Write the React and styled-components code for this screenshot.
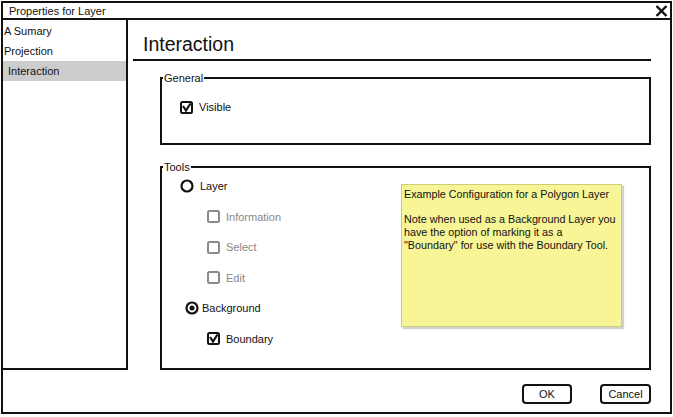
import React from 'react';
import styled, { createGlobalStyle } from 'styled-components';

const GlobalStyle = createGlobalStyle`
  body {
    margin: 0;
    background: #fff;
    font-family: "Liberation Sans", Arial, sans-serif;
    color: #111;
  }
`;

const Window = styled.div`
  box-sizing: border-box;
  width: 671px;
  height: 413px;
  margin: 1px 0 0 1px;
  border: 2px solid #111;
  display: flex;
  flex-direction: column;
`;

const TitleBar = styled.div`
  height: 15px;
  border-bottom: 2px solid #111;
  display: flex;
  align-items: center;
  justify-content: space-between;
  padding: 0 2px 0 6px;
  font-size: 11px;
`;

const Body = styled.div`
  display: flex;
  height: 350px;
`;

const Sidebar = styled.div`
  box-sizing: border-box;
  width: 125px;
  border-right: 2px solid #111;
  border-bottom: 2px solid #111;
  padding-top: 1px;
`;

const NavItem = styled.div`
  height: 20px;
  line-height: 20px;
  font-size: 11px;
  padding-left: ${(p) => (p.selected ? '5px' : '1px')};
  background: ${(p) => (p.selected ? '#cccccc' : 'transparent')};
`;

const Main = styled.div`
  flex: 1;
  display: flex;
  flex-direction: column;
`;

const Heading = styled.h1`
  margin: 0 19px 0 5px;
  padding: 13px 0 4px 10px;
  font-size: 19.5px;
  font-weight: normal;
  line-height: 22px;
  border-bottom: 2px solid #111;
`;

const Group = styled.fieldset`
  margin: ${(p) => p.top}px 19px 0 32px;
  padding: 0;
  min-width: 0;
  border: 2px solid #111;
  flex: ${(p) => (p.grow ? 1 : 'none')};
`;

const GroupLabel = styled.legend`
  margin-left: 1px;
  padding: 0 1px;
  font-size: 11px;
  line-height: 12px;
`;

const GeneralBody = styled.div`
  padding: 15px 0 28px 18px;
`;

const ToolsBody = styled.div`
  display: flex;
  justify-content: space-between;
`;

const OptionList = styled.div`
  display: flex;
  flex-direction: column;
  gap: 14.6px;
  padding: 5px 0 0 18px;
`;

const Option = styled.div`
  display: flex;
  align-items: center;
  height: 16px;
  padding-left: ${(p) => p.indent || 0}px;
  gap: ${(p) => p.space || 6}px;
  font-size: 11px;
  color: ${(p) => (p.disabled ? '#888' : '#111')};
`;

const StickyNote = styled.div`
  box-sizing: border-box;
  width: 221px;
  height: 143px;
  margin: 11px 27px 0 0;
  padding: 3px 2px;
  background: #f8f597;
  border: 1px solid #cfcc78;
  box-shadow: 2px 2px 1px rgba(0, 0, 0, 0.18);
  font-size: 10.75px;
  line-height: 12.7px;
  white-space: nowrap;
`;

const NoteLine = styled.p`
  margin: 0 0 12.7px;
`;

const Footer = styled.div`
  flex: 1;
  display: flex;
  justify-content: flex-end;
  align-items: flex-start;
  gap: 28px;
  padding: 14px 19px 0 0;
`;

const Button = styled.button`
  box-sizing: border-box;
  width: ${(p) => p.w}px;
  height: 20px;
  padding: 0;
  border: 2px solid #111;
  border-radius: 4px;
  background: #fff;
  font-family: inherit;
  font-size: 11px;
  color: #111;
`;

function CloseIcon() {
  return (
    <svg width="13" height="12" viewBox="0 0 13 12">
      <path d="M1.5 1 L11.5 11 M11.5 1 L1.5 11" stroke="#111" strokeWidth="2.4" fill="none" />
    </svg>
  );
}

function CheckBox({ checked, disabled }) {
  const c = disabled ? '#8a8a8a' : '#111';
  return (
    <svg width="13" height="13" viewBox="0 0 13 13">
      <rect x="1" y="1" width="11" height="11" rx="1.5" stroke={c} strokeWidth="2" fill="#fff" />
      {checked && <path d="M3 5 L6 9.5 L10.5 2.5" stroke={c} strokeWidth="2.2" fill="none" />}
    </svg>
  );
}

function Radio({ checked }) {
  return (
    <svg width="14" height="14" viewBox="0 0 14 14">
      <circle cx="7" cy="7" r="5.5" stroke="#111" strokeWidth="2.2" fill="#fff" />
      {checked && <circle cx="7" cy="7" r="2.5" fill="#111" />}
    </svg>
  );
}

const navItems = ['A Sumary', 'Projection', 'Interaction'];

export default function App() {
  return (
    <>
      <GlobalStyle />
      <Window>
        <TitleBar>
          <span>Properties for Layer</span>
          <CloseIcon />
        </TitleBar>
        <Body>
          <Sidebar>
            {navItems.map((item) => (
              <NavItem key={item} selected={item === 'Interaction'}>
                {item}
              </NavItem>
            ))}
          </Sidebar>
          <Main>
            <Heading>Interaction</Heading>
            <Group top={11}>
              <GroupLabel>General</GroupLabel>
              <GeneralBody>
                <Option>
                  <CheckBox checked />
                  Visible
                </Option>
              </GeneralBody>
            </Group>
            <Group top={16} grow>
              <GroupLabel>Tools</GroupLabel>
              <ToolsBody>
                <OptionList>
                  <Option>
                    <Radio />
                    Layer
                  </Option>
                  <Option indent={27} disabled>
                    <CheckBox disabled />
                    Information
                  </Option>
                  <Option indent={27} disabled>
                    <CheckBox disabled />
                    Select
                  </Option>
                  <Option indent={27} disabled>
                    <CheckBox disabled />
                    Edit
                  </Option>
                  <Option indent={5} space={3}>
                    <Radio checked />
                    Background
                  </Option>
                  <Option indent={27}>
                    <CheckBox checked />
                    Boundary
                  </Option>
                </OptionList>
                <StickyNote>
                  <NoteLine>Example Configuration for a Polygon Layer</NoteLine>
                  <NoteLine>
                    Note when used as a Background Layer you
                    <br />
                    have the option of marking it as a
                    <br />
                    "Boundary" for use with the Boundary Tool.
                  </NoteLine>
                </StickyNote>
              </ToolsBody>
            </Group>
          </Main>
        </Body>
        <Footer>
          <Button w={50}>OK</Button>
          <Button w={51}>Cancel</Button>
        </Footer>
      </Window>
    </>
  );
}
